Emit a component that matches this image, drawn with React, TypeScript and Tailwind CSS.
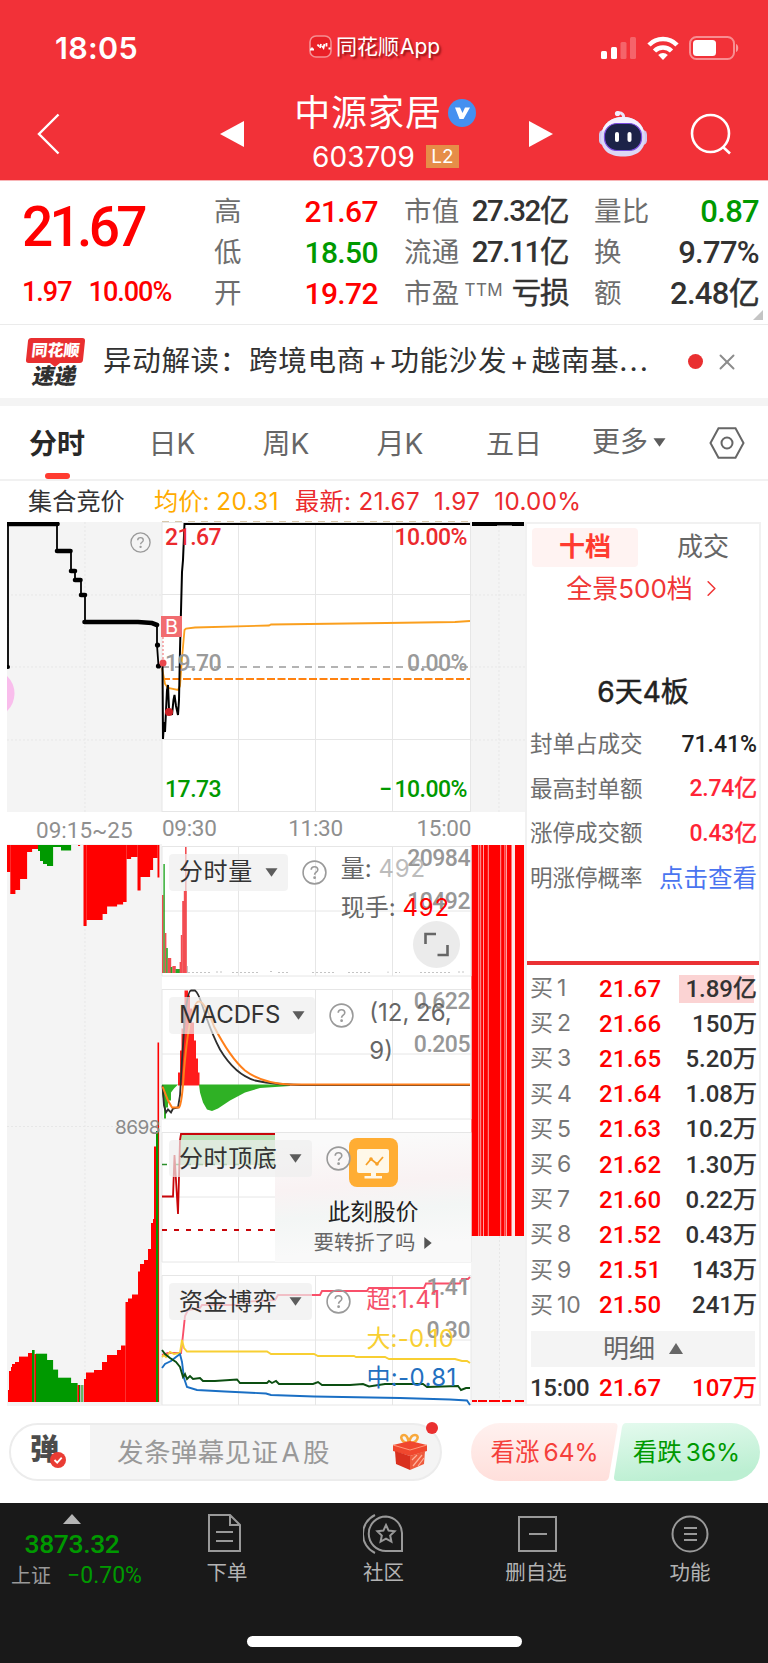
import { ReactNode } from "react"
import { ChevronRight, X } from "lucide-react"

const num = "font-['Roboto','Noto_Sans_CJK_SC',sans-serif] font-medium"

const quotes = [
  [
    { label: '高', value: '21.67', color: 'text-[#ff0000]' },
    { label: '低', value: '18.50', color: 'text-[#009900]' },
    { label: '开', value: '19.72', color: 'text-[#ff0000]' },
  ],
  [
    { label: '市值', value: '27.32亿', color: 'text-[#323232]' },
    { label: '流通', value: '27.11亿', color: 'text-[#323232]' },
    { label: '市盈', sup: 'TTM', value: '亏损', color: 'text-[#323232]' },
  ],
  [
    { label: '量比', value: '0.87', color: 'text-[#009900]' },
    { label: '换', value: '9.77%', color: 'text-[#323232]' },
    { label: '额', value: '2.48亿', color: 'text-[#323232]' },
  ],
]

const quoteCols = [
  'w-[164px] text-[30px] tracking-[-0.600px]',
  'w-[164px] ml-[26px] text-[29.500px] tracking-[-1.400px]',
  'w-[165px] ml-[26px] text-[31px] tracking-[-0.700px]',
]

const bids = [
  ['1', '21.67', '1.89亿'],
  ['2', '21.66', '150万'],
  ['3', '21.65', '5.20万'],
  ['4', '21.64', '1.08万'],
  ['5', '21.63', '10.2万'],
  ['6', '21.62', '1.30万'],
  ['7', '21.60', '0.22万'],
  ['8', '21.52', '0.43万'],
  ['9', '21.51', '143万'],
  ['10', '21.50', '241万'],
]

const limitInfo = [
  { label: '封单占成交', value: '71.41%', style: 'text-[#222222] font-medium' },
  { label: '最高封单额', value: '2.74亿', style: 'text-[#ff2436] font-medium tracking-[-0.200px]' },
  { label: '涨停成交额', value: '0.43亿', style: 'text-[#ff2436] font-medium tracking-[-0.200px]' },
  { label: '明涨停概率', value: '点击查看', style: 'text-[#4a74f0] text-[24.500px] font-normal' },
]

// [x, width, top, color]
const auctionBars: [number, number, number, string][] = [
  [8, 1.5, 1390, 'r'], [9, 2, 1371, 'r'], [11, 1.5, 1367, 'r'], [12, 3, 1364, 'r'], [15, 4, 1362, 'r'], [19, 9, 1356.6, 'r'], [28, 4, 1353, 'r'],
  [32, 2.5, 1350, 'g'], [34.5, 2, 1354, 'r'], [36, 11, 1353.7, 'g'], [47, 6, 1360, 'g'], [53, 5, 1369.6, 'g'],
  [58, 13, 1377.7, 'g'], [71, 6.5, 1383, 'g'], [77.5, 1.5, 1385, 'r'], [79, 1, 1385, 'g'], [80, 1.5, 1385, 'x'], [81.5, 1, 1385, 'g'], [83, 2, 1385, 'x'],
  [84, 2, 1379, 'r'], [86, 8, 1372.5, 'r'], [94, 8, 1370, 'r'], [102, 5, 1362, 'r'], [107, 10, 1355, 'r'], [117, 4, 1350, 'r'],
  [121, 4.5, 1345.5, 'r'], [125.5, 3, 1302, 'r'], [128, 4, 1298.5, 'r'], [132, 6, 1294.5, 'r'], [138, 2, 1271.5, 'r'],
  [140, 4, 1264, 'r'], [144, 4, 1260, 'r'], [148, 3, 1249, 'r'], [151, 2, 1223, 'r'], [153, 1, 1219, 'r'], [154, 2, 1146.5, 'r'],
  [157.5, 1.5, 1042.5, 'r'], [156, 2.2, 1131, 'g'],
]

// [x, width, bottom, color]
const unmatchedBars: [number, number, number, string][] = [
  [7, 3.3, 872, 'r'], [10.3, 5, 894, 'r'], [15, 5, 890, 'r'], [20, 7, 879, 'r'], [27, 5, 852, 'r'], [32, 6, 849, 'r'],
  [38, 2, 851, 'g'], [40, 3, 861, 'g'], [43, 4, 864, 'g'], [47, 6, 866, 'g'], [53, 8, 847, 'g'], [61, 10, 850.5, 'g'], [78, 2, 846, 'r'],
  [83.5, 3, 926, 'r'], [86.5, 16, 920, 'r'], [102, 5, 914, 'r'], [107, 10, 906.5, 'r'], [117, 6, 904.5, 'r'], [121, 5.5, 902, 'r'],
  [126.5, 4.5, 859, 'r'], [131, 6.5, 857, 'r'], [137.5, 3, 890.5, 'r'], [140, 10, 877, 'r'], [150, 3, 870, 'r'], [153, 4.5, 858, 'r'], [157.5, 1.8, 877.5, 'r'],
]

const volumeBars: [number, number, number, string][] = [
  [162, 1.6, 894, 'r'], [163.4, 1.4, 863, 'g'], [164.8, 1.6, 932, 'r'], [166.2, 1.6, 947, 'g'], [167.6, 3.6, 957, 'r'], [170.6, 2, 966, 'g'],
  [172.4, 3.4, 965, 'r'], [175.6, 4.4, 968, 'g'], [179.6, 1.6, 961, 'r'], [180.8, 1.6, 934, 'r'], [182.2, 1.8, 900, 'r'], [183.8, 2.8, 890, 'r'], [185, 1.6, 846, 'r'], [187, 1, 965, 'x'],
]

const barColor: Record<string, string> = { r: '#ff0000', g: '#009900', x: '#bbbbbb' }

// digits stay medium, the chinese unit behind them is a bit lighter
const Value = ({ text }: { text: string }) => {
  const unit = text.replace(/[0-9.%]/g, '')
  return (
    <>{text.replace(unit, '')}{unit && <span className="font-normal [-webkit-text-stroke:0.5px_currentColor]">{unit}</span>}</>
  )
}

const HelpIcon = ({ size = 25 }: { size?: number }) => (
  <svg width={size} height={size} viewBox="0 0 25 25" fill="none" stroke="#9a9a9a" strokeWidth="1.6" className="shrink-0">
    <circle cx="12.5" cy="12.5" r="11.4" />
    <path d="M9.2 9.8c0-1.9 1.4-3.1 3.3-3.1s3.3 1.2 3.3 3c0 2.4-3.2 2.6-3.2 5" />
    <circle cx="12.6" cy="17.7" r="0.6" fill="#9a9a9a" />
  </svg>
)

const Caret = () => (
  <svg width="13" height="9" viewBox="0 0 13 9" fill="#5c5c5c"><path d="M0.500 0.200h12L6.500 8.800z" /></svg>
)

const StatusBar = () => {
  return (
    <div className="flex items-center h-[95px] pl-[55px] pr-[29px] text-white">
      <span className="w-[282px] text-[30.500px] font-semibold tracking-[0.300px]">18:05</span>
      <div className="flex items-center gap-1 text-[21px] [text-shadow:2px_2px_2px_rgba(80,0,0,0.6)]">
        <svg width="23" height="23" viewBox="0 0 23 23" className="ml-[-28px] -mt-[2px]">
          <rect x="1" y="1" width="21" height="21" rx="6" fill="#e92027" stroke="#f58e91" strokeWidth="1.6" />
          <path d="M1 14.500h4M3 12.500v3M8.500 9.500l1.500 2M11 13l1-4M13 11l1.500 2 1-4M17.500 8v3.500M19.500 13.500h2" stroke="white" strokeWidth="1.800" fill="none" />
        </svg>
        <span className="-mt-[2px]">同花顺<span className="ml-[1px]">App</span></span>
      </div>
      <div className="ml-auto flex items-center gap-[10px]">
        <svg width="36" height="24" viewBox="0 0 36 24" fill="white">
          <rect x="0" y="15" width="6" height="8" rx="1.5" />
          <rect x="10" y="11" width="6" height="12" rx="1.5" />
          <rect x="19.500" y="6" width="6" height="17" rx="1.5" opacity="0.25" />
          <rect x="29" y="1" width="6" height="22" rx="1.5" opacity="0.25" />
        </svg>
        <svg width="32" height="24" viewBox="0 0 32 24" fill="none" stroke="white" strokeWidth="4.6">
          <path d="M2 9a19.500 19.500 0 0 1 28 0" />
          <path d="M7.500 15a12 12 0 0 1 17 0" />
          <path d="M16 24l-4.800-5a6.800 6.800 0 0 1 9.600 0z" fill="white" stroke="none" />
        </svg>
        <svg width="50" height="24" viewBox="0 0 50 24">
          <rect x="1" y="1" width="44" height="22" rx="6.500" fill="none" stroke="white" strokeOpacity="0.45" strokeWidth="2" />
          <rect x="4" y="4" width="23" height="16" rx="3.500" fill="white" />
          <path d="M47 8v8c3-1 3-7 0-8z" fill="white" opacity="0.5" />
        </svg>
      </div>
    </div>
  )
}

const Robot = () => (
  <svg width="50" height="48" viewBox="0 0 50 48" className="-ml-px">
    <path d="M25 10c2-5-1-8-6-7" fill="none" stroke="#e8e4fa" strokeWidth="3" />
    <circle cx="19.500" cy="3.500" r="2.600" fill="#f3efff" />
    <rect x="1" y="20" width="9" height="15" rx="4.500" fill="#cfc9ee" />
    <rect x="40" y="20" width="9" height="15" rx="4.500" fill="#cfc9ee" />
    <path d="M25 7C12 7 3 15 3 28c0 13 9 18.500 22 18.500S47 41 47 28C47 15 38 7 25 7z" fill="#dcd8f6" />
    <path d="M25 7C14 7 6 13 4 22c10-8 32-8 42 0C44 13 36 7 25 7z" fill="#f4f2ff" />
    <rect x="6.500" y="13.500" width="37" height="27" rx="12.500" fill="#1c2348" stroke="#7b4be0" strokeWidth="1.2" />
    <rect x="17" y="22" width="4" height="10" rx="2" fill="white" />
    <rect x="29.500" y="22" width="4" height="10" rx="2" fill="white" />
  </svg>
)

const TitleBar = () => {
  return (
    <div className="flex items-center h-[77px] text-white pl-[37px] pr-9">
      <svg width="23" height="42" viewBox="0 0 23 42" fill="none" stroke="white" strokeWidth="2.400"><path d="M21.500 1.500L2 21l19.500 19.500" /></svg>
      <svg width="24" height="26" viewBox="0 0 24 26" fill="white" className="ml-[160px]"><path d="M24 0v26L0 13z" /></svg>
      <div className="w-[285px] flex flex-col items-center mt-[2px]">
        <div className="flex items-center gap-[6px] h-[44px] pr-[3px]">
          <span className="text-[36px] leading-[44px] tracking-[0.900px]">中源家居</span>
          <svg width="28" height="28" viewBox="0 0 28 28">
            <circle cx="14" cy="14" r="14" fill="#4590f0" />
            <path d="M7 8.500h5l2.500 5.500 2.500-5.500h5L15.500 20h-4z" fill="white" />
          </svg>
        </div>
        <div className="flex items-center h-[44px] pr-[2px]">
          <span className="text-[28px] leading-[44px]">603709</span>
          <span className="ml-[11px] w-[33px] h-[23px] bg-[#e68d48] text-[19px] leading-[23px] text-center">L2</span>
        </div>
      </div>
      <svg width="24" height="26" viewBox="0 0 24 26" fill="white"><path d="M0 0v26l24-13z" /></svg>
      <div className="ml-auto flex items-center gap-[42px]">
        <Robot />
        <svg width="42" height="42" viewBox="0 0 42 42" fill="none" stroke="white" strokeWidth="2.600">
          <circle cx="20.500" cy="20.500" r="18.500" />
          <path d="M33 34l7 6.500" />
        </svg>
      </div>
    </div>
  )
}

const Quote = () => {
  return (
    <section className="relative flex h-[145px] border-b border-[#ebebeb] border-t border-t-[#f8b5b7] pr-[9px]">
      <div className={`w-[214px] pl-[22px] text-[#ff0000] ${num}`}>
        <p className="mt-[13px] text-[55px] leading-[66px] tracking-[-3.700px]">21.67</p>
        <p className="mt-[13px] text-[27px] leading-[38px] tracking-[-1px] flex gap-[17px]"><span>1.97</span><span>10.00%</span></p>
      </div>
      {quotes.map((col, i) => (
        <div className={`${quoteCols[i]} pt-[10px]`} key={i}>
          {col.map((item: any) => (
            <div className="flex items-center justify-between h-[41px]" key={item.label}>
              <span className="flex text-[27.500px] leading-none tracking-[0.300px] text-[#6e6e6e] whitespace-nowrap">{item.label}
                {item.sup && <sup className="text-[17px] leading-none ml-[5px] mt-[2px] top-0">{item.sup}</sup>}
              </span>
              <span className={`${num} ${item.color} leading-none whitespace-nowrap`}><Value text={item.value} /></span>
            </div>
          ))}
        </div>
      ))}
      <svg width="10" height="10" className="absolute right-[5px] bottom-[4px]" viewBox="0 0 10 10" fill="#c4c4c4"><path d="M10 0v10H0z" /></svg>
    </section>
  )
}

const News = () => {
  return (
    <section className="flex items-center h-[81px] border-b-8 border-[#f4f4f4]">
      <div className="ml-[25px] w-[60px] flex flex-col items-center">
        <div className="w-[57px] h-[25px] bg-[#e92f30] rounded-[3px] -skew-x-6 text-white text-[16px] leading-[25px] font-black text-center">同花顺</div>
        <svg width="10" height="4" viewBox="0 0 10 4" fill="#e92f30"><path d="M0 0h10L5 4z" /></svg>
        <div className="-skew-x-12 text-[#303030] text-[22px] leading-[18px] font-black">速递</div>
      </div>
      <p className="ml-[18px] w-[560px] text-[28.500px] leading-none tracking-[0.700px] text-[#323232] whitespace-nowrap">
        异动解读：跨境电商<span className="mx-[2.500px]">+</span>功能沙发<span className="mx-[2.500px]">+</span>越南基<span className="tracking-[2px]">...</span>
      </p>
      <span className="ml-[25px] size-[15px] rounded-full bg-[#e92f30]" />
      <X size={26} color="#8c8c8c" strokeWidth={1.800} className="ml-[11px]" />
    </section>
  )
}

const Tabs = () => {
  return (
    <nav className="flex h-[75px] border-b-2 border-[#f1f1f1] text-[28px] text-[#666666] leading-[77px] text-center">
      <div className="relative w-[114px] font-bold text-[#282828]">分时
        <span className="absolute left-[45px] bottom-0 w-[25px] h-[6px] rounded-[3px] bg-[#ff3b30]" />
      </div>
      {['日K', '周K', '月K', '五日'].map((tab) => (
        <div className="w-[114px] pl-[2px]" key={tab}>{tab}</div>
      ))}
      <div className="w-[118px] flex items-center justify-center gap-[5px]">更多<Caret /></div>
      <div className="w-[77px] flex items-center justify-center">
        <svg width="36" height="32" viewBox="0 0 36 32" fill="none" stroke="#666666" strokeWidth="2">
          <path d="M9.500 1.200h17L34.500 16l-8 14.800h-17L1.500 16z" />
          <circle cx="18" cy="16" r="5.500" />
        </svg>
      </div>
    </nav>
  )
}

const AuctionColumn = () => {
  return (
    <div className="w-[155px]">
      <svg width="155" height="290" viewBox="7 522 155 290" className="block bg-[#f4f4f4]">
        <path d="M7 595H162M7 667H162M7 740H162M85 522V812" stroke="#e7e7e7" strokeDasharray="2 2" />
        <circle cx="-10" cy="693.500" r="24.500" fill="#f9bdec" />
        <path d="M8 667V524H57V551H71V571H75V580H81V595H85V622L152 623L157 626V645L158.500 666" fill="none" stroke="black" strokeWidth="1.800" />
        <path d="M8 524H57.500M57 551H70.500M71 571H75M75 580H80.500M81 595H85M84.500 622H138L152 623L157 625" fill="none" stroke="black" strokeWidth="4.600" strokeLinecap="round" />
        <circle cx="157.500" cy="645" r="2.600" />
        <circle cx="158.500" cy="666" r="2.600" />
        <circle cx="8" cy="667" r="2" />
        <svg x="130" y="532"><HelpIcon size={21} /></svg>
      </svg>
      <div className="h-[32px] pl-[29px] text-[#8f8f8f] font-['Roboto'] text-[22.500px] leading-[37px]">09:15~25</div>
      <svg width="155" height="562" viewBox="7 844 155 562" className="block bg-[#f4f4f4]">
        <path d="M7 1126.500H162M85 845V1400" stroke="#e7e7e7" strokeDasharray="2 2" />
        {unmatchedBars.map(([x, w, y, c], i) => <rect key={i} x={x} y="845" width={w + 0.1} height={y - 845} fill={barColor[c]} />)}
        {auctionBars.map(([x, w, y, c], i) => <rect key={i} x={x} y={y} width={w + 0.1} height={1402 - y} fill={barColor[c]} />)}
        <text x="160" y="1133.500" textAnchor="end" fill="#8a8a8a" className="font-['Inter'] text-[19px] tracking-[-0.500px]">8698</text>
      </svg>
    </div>
  )
}

const axis = "font-['Roboto'] font-medium text-[23px] tracking-[-0.500px]"

const PriceChart = () => {
  return (
    <svg width="309" height="290" viewBox="162 522 309 290" className="block overflow-visible">
      <path d="M162 522.500H471M162 594.500H471M162 739.500H471M162 811.500H471M162 522V812M238.500 522V812M315.500 522V812M392.500 522V812M470.500 522V812" stroke="#e6e6e6" />
      <path d="M162 521.500H471" stroke="#d9c9ac" strokeDasharray="7 6" />
      <path d="M162 667H471" stroke="#9a9a9a" strokeWidth="1.500" strokeDasharray="7 6" />
      <path d="M162 679H470" stroke="#ff8210" strokeWidth="2" strokeDasharray="8 2.500" />
      <path d="M162 668L165 684L168 688L178 690L180 686L182 658L184.500 630L186 628.500L195 627.500L269 625.500L271 624.500L386 623L455 622L470 621" fill="none" stroke="#fa9f1e" strokeWidth="1.800" />
      <path d="M162.500 664L163 739L164 722L165 732L167 690L168 685L169 709L171 712L172 715L173.500 700L174.500 695L176 706L178 715L179 700L180 650L182 572L183 560L184.500 524H470" fill="none" stroke="black" strokeWidth="2" />
      <path d="M163 637V660" stroke="#f2686c" strokeDasharray="2 2" />
      <circle cx="163" cy="663" r="3.500" fill="#e9474c" />
      <circle cx="169" cy="712" r="4" fill="#cc2227" />
      <rect x="161" y="616" width="21" height="21" fill="#f16c70" />
      <text x="171.500" y="634" textAnchor="middle" fill="white" className="font-['Inter'] text-[20px]">B</text>
      <g className={axis}>
        <text x="165" y="545" fill="#eb2a2e">21.67</text>
        <text x="467" y="545" textAnchor="end" fill="#eb2a2e">10.00%</text>
        <text x="165" y="671" fill="#9a9a9a">19.70</text>
        <text x="467" y="671" textAnchor="end" fill="#9a9a9a">0.00%</text>
        <text x="165" y="797" fill="#009900">17.73</text>
        <text x="467" y="797" textAnchor="end" fill="#009900"><tspan>−</tspan><tspan dx="3">10.00%</tspan></text>
      </g>
    </svg>
  )
}

type PanelProps = { top: number, title: string, info?: ReactNode, labels?: string[], popup?: ReactNode, children: ReactNode }

const Panel = ({ top, title, info, labels = [], popup, children }: PanelProps) => {
  return (
    <div className="relative h-[130.500px] mb-[12.800px]">
      <svg width="309" height="131" viewBox={`162 ${top} 309 131`} className="absolute inset-0 overflow-visible">
        <path d={`M162 ${top + 0.5}h309v129.500h-309zM162 ${top + 65}h309M238.500 ${top}v130M315.500 ${top}v130M392.500 ${top}v130`} fill="none" stroke="#e6e6e6" />
        {children}
        <g fill="#979797" className={axis}>
          {labels.map((label, i) => <text key={label} x="470" y={top + 19.5 + i * 43} textAnchor="end">{label}</text>)}
        </g>
      </svg>
      {popup}
      <div className="relative flex items-start pt-2 pl-[7px] text-[24px] text-[#333333]">
        <div className="flex items-center gap-[12px] h-[37px] pl-[10px] pr-[10px] rounded bg-[#eeeeee]/70 whitespace-nowrap leading-none">
          <span className={title == 'MACDFS' ? 'tracking-[-0.100px]' : 'tracking-[0.600px]'}>{title}</span><Caret />
        </div>
        <div className="flex items-center h-[37px] ml-[14px]"><HelpIcon /></div>
        {info}
      </div>
    </div>
  )
}

const ChartColumn = () => {
  return (
    <div className="w-[309px]">
      <PriceChart />
      <div className="flex justify-between h-[33.600px] text-[#8f8f8f] font-['Roboto'] text-[22.500px] leading-[32px] tracking-[-0.300px]">
        <span>09:30</span><span className="-ml-[2px]">11:30</span><span>15:00</span>
      </div>
      <Panel top={845} title="分时量" labels={['20984', '10492']}
        info={
          <div className="ml-[14px] text-[#666666] leading-[38.500px] -mt-[3.500px] whitespace-nowrap">
            <p>量: <span className="text-[#bcbcbc] tracking-[0.800px]">492</span></p>
            <p>现手: <span className="text-[#ff0000] tracking-[0.800px]">492</span></p>
          </div>
        }
        popup={
          <div className="absolute left-[251px] top-[75px] size-[47px] rounded-full bg-[#ebebeb] flex items-center justify-center">
            <svg width="25" height="25" viewBox="0 0 25 25" fill="none" stroke="#666666" strokeWidth="2.600"><path d="M1.500 12V2H12M23.500 13V23H13.500" /></svg>
          </div>
        }
      >
        <g opacity="0.85">
          {volumeBars.map(([x, w, y, c], i) => <rect key={i} x={x} y={y} width={w} height={972 - y} fill={c == 'r' ? '#f02f35' : barColor[c]} />)}
        </g>
        <path d="M188 971.500H210M216 971H224M232 971.500H258M270 970.500H274M278 971.500H290M312 971.500H335M348 971.500H370M388 970.500V972M395 971.500H400M420 971.500H450M458 971H465" stroke="#c4c4c4" strokeDasharray="2 2" />
      </Panel>
      <Panel top={988.5} title="MACDFS" labels={['0.622', '0.205']}
        info={<p className="ml-[15px] w-[95px] pr-2 text-[#666666] leading-[38px] -mt-[3px]">(12, 26, 9)</p>}
      >
        <path d="M178 1085V1072H180V1050H181.500V1028H183V1008H184.500V990H188V995H190V1008H192V1022H194V1040H196V1058H198V1072H199.500V1085z" fill="#ff1c1c" />
        <path d="M162 1084H178L174 1088L171 1092V1100H168V1107H166V1118H164V1104L162 1092z" fill="#2fb125" />
        <path d="M199 1084L200 1092L203 1102L207 1109L212 1110.500L218 1108L230 1100L245 1092L260 1087.500L290 1085.500V1084z" fill="#2fb125" />
        <path d="M162.500 1085L164 1105L166 1112L168 1109L171 1112L173 1108L178 1107L180 1095L182 1060L185 1015Q188 990 191 990H195Q198 992 202 1004Q211 1032 220 1049Q235 1074 255 1080Q275 1084.500 310 1084.500H470" fill="none" stroke="#2e2e2e" strokeWidth="1.800" />
        <path d="M162.500 1086L168 1100L172 1107H179Q182 1104 184 1070Q190 1001 199 1001Q205 1001 214 1026Q230 1057 245 1070Q262 1083 290 1084H470" fill="none" stroke="#ff7f1a" strokeWidth="2" />
      </Panel>
      <Panel top={1132} title="分时顶底"
        popup={
          <div className="absolute right-0 top-px w-[196px] h-[129px] flex flex-col items-center bg-[linear-gradient(175deg,#fafafa_10%,#f9f2f3_40%,#f3f6f5_60%,#f9f9f9_85%)]">
            <svg width="49" height="49" viewBox="0 0 49 49" className="mt-[5px] shrink-0">
              <rect width="49" height="49" rx="8" fill="#ffad33" />
              <rect x="8" y="11" width="32" height="24" rx="2" fill="#fff8e8" />
              <path d="M22 35h5v3h6v2.500H15.500V38H22z" fill="#fff8e8" />
              <path d="M17 27l5-6 6 5 6-7" fill="none" stroke="#f7a128" strokeWidth="1.800" />
              <circle cx="22" cy="21" r="1.800" fill="#f7a128" /><circle cx="28" cy="26" r="1.800" fill="#f7a128" />
            </svg>
            <p className="mt-[8px] text-[22.700px] leading-[34px] text-[#222222]">此刻股价</p>
            <p className="flex items-center gap-[9px] text-[20.400px] leading-[28px] text-[#666666]">要转折了吗
              <svg width="8" height="12" viewBox="0 0 8 13" fill="#555555"><path d="M0 0l8 6.500L0 13z" /></svg>
            </p>
          </div>
        }
      >
        <rect x="180" y="1134" width="95" height="31" fill="#b7e1b5" />
        <path d="M162 1164.500H275" stroke="#2c8f2c" strokeWidth="1.600" strokeDasharray="5 7" />
        <path d="M162 1230H275" stroke="#c8060a" strokeWidth="2" strokeDasharray="5 7" />
        <path d="M162 1196.500H173L174.500 1155L178 1214L180 1140L181 1134H275" fill="none" stroke="#c8060a" strokeWidth="1.800" />
      </Panel>
      <div className="-mb-[13px]">
        <Panel top={1275} title="资金博弈" labels={['1.41', '0.30']}
          info={
            <div className="ml-[15px] leading-[38.800px] whitespace-nowrap -mt-[2px]">
              <p className="text-[#f5506a] tracking-[0.300px]">超:1.41</p>
              <p className="text-[#f8cf33] tracking-[0.200px]">大:-0.10</p>
              <p className="text-[#2370c0] tracking-[0.400px]">中:-0.81</p>
            </div>
          }
        >
          <g fill="none" strokeWidth="1.900">
            <path d="M162 1355L168 1353H181L183 1335L185 1316L188 1310L200 1308L202 1305H238L240 1302L275 1300L278 1295H320L322 1291H367L369 1288H424L426 1283.500H460L462 1279H468L470 1277" stroke="#f9506a" />
            <path d="M162 1357L164 1355L166 1357L170 1352L174 1354L180 1353L182 1340L184 1348L187 1351.500H267L271 1354H314L318 1356H354L356 1357H385L389 1359H455L462 1361L467 1361L470 1363" stroke="#f8cf33" />
            <path d="M162 1368L165 1364L171 1361L176 1357L180 1354L182 1362L184 1378L187 1387L197 1390L225 1391.500L266 1393.500L271 1395L314 1396.500L400 1398L450 1399.500L467 1400.500L470 1405" stroke="#1a6fc4" />
            <path d="M162 1350L165 1354L170 1358L176 1362L180 1367L183 1377L185 1374L187 1379L190 1376L193 1379L200 1378L203 1381L215 1381L237 1379.500L240 1383H267L269 1381L272 1383L276 1381L279 1384H313L318 1382L322 1385L350 1385L363 1384L369 1386.500L385 1384H423L427 1387L458 1386L461 1390L466 1388L470 1388" stroke="#0c4f12" />
          </g>
        </Panel>
      </div>
    </div>
  )
}

const AfterHours = () => {
  return (
    <div className="w-[54px]">
      <svg width="54" height="290" viewBox="471 522 54 290" className="block bg-[#f4f4f4]">
        <path d="M471 595H525M471 667H525M471 740H525M499 522V812" stroke="#e7e7e7" strokeDasharray="2 2" />
        <path d="M472 524H497M497 523.500H512M512 524H524" stroke="black" strokeWidth="4" />
      </svg>
      <div className="h-[33px]" />
      <svg width="54" height="561" viewBox="471 845 54 561" className="block bg-[#f4f4f4]">
        <path d="M499.500 1236V1400" stroke="#e7e7e7" strokeDasharray="2 2" />
        <rect x="471.500" y="845" width="52.500" height="391" fill="#ff0000" />
        <path d="M478.700 845V1236M480.700 845V1236M483.500 845V1236M488.300 845V1236M500.700 845V1236M504.900 845V1236M506.500 845V1236" stroke="#ffc9c9" strokeWidth="0.800" />
        <rect x="511.500" y="845" width="3.500" height="391" fill="#fde8e8" />
        <path d="M472 1401H477M478 1401H487M489 1401H500M502 1401H511M515 1401H524" stroke="#ff0000" strokeWidth="2" />
      </svg>
    </div>
  )
}

const OrderBook = () => {
  return (
    <aside className="w-[236px] h-[884px] border-2 border-[#f1f1f1]">
      <div className="flex pt-[4px] pl-[5px] text-[26px] leading-[38px] text-center">
        <span className="w-[106px] h-[39px] rounded bg-[#fff3f2] text-[#ff3b30] font-bold shrink-0">十档</span>
        <span className="w-[121px] pl-[9px] text-[#666666] shrink-0">成交</span>
      </div>
      <div className="flex items-center justify-center gap-[5px] h-[43px] text-[26px] text-[#f03636]">全景500档
        <ChevronRight size={27} strokeWidth={1.400} className="-mr-[5px]" />
      </div>
      <p className="mt-[60px] h-[44px] text-center text-[28px] leading-[44px] text-[#222222] [-webkit-text-stroke:0.5px_currentColor]">6天4板</p>
      <div className="mt-[8px] pl-[3px] pr-[2px]">
        {limitInfo.map((item) => (
          <div className="flex items-center justify-between h-[44.500px] leading-none text-[22.500px] whitespace-nowrap" key={item.label}>
            <span className="text-[#6e6e6e]">{item.label}</span>
            {item.value == '点击查看'
              ? <span className={item.style}>{item.value}</span>
              : <span className={`text-[23px] font-['Roboto','Noto_Sans_CJK_SC'] ${item.style}`}><Value text={item.value} /></span>}
          </div>
        ))}
      </div>
      <hr className="border-t-4 border-[#ea3134] mt-[61px] mb-[6px]" />
      <div className="pl-[3px] pr-[2px]">
        {bids.map(([level, price, amount], i) => (
          <div className={`flex items-center h-[35.200px] leading-none text-[24px] text-[#323232] ${num}`} key={level}>
            <span className="w-[69px] text-[#777777] text-[23px] font-normal font-['Inter','Noto_Sans_CJK_SC']">买<span className="ml-1">{level}</span></span>
            <span className="text-[#ff0000] tracking-[0.200px]">{price}</span>
            <span className={i == 0 ? "ml-auto pl-[6px] py-[2px] bg-[linear-gradient(to_right,#fbd3d3_75px,transparent_75px)]" : "ml-auto"}><Value text={amount} /></span>
          </div>
        ))}
      </div>
      <div className="ml-[4px] mr-[4px] mt-[8px] h-[36px] bg-[#f4f4f4] flex items-center justify-center gap-[14px] text-[26px] leading-none text-[#666666]">明细
        <svg width="14" height="11" viewBox="0 0 14 11" fill="#666666"><path d="M7 0l7 11H0z" /></svg>
      </div>
      <div className={`flex items-center h-[43px] pl-[3px] pr-[2px] text-[24px] leading-none text-[#ff0000] ${num}`}>
        <span className="w-[69px] text-[#323232] tracking-[-0.300px]">15:00</span>
        <span className="tracking-[0.200px]">21.67</span>
        <span className="ml-auto"><Value text="107万" /></span>
      </div>
    </aside>
  )
}

const Danmu = () => {
  return (
    <div className="flex items-center h-[97px] pl-[9px] pr-2 pb-[6px]">
      <div className="relative flex items-center w-[433px] h-[58px] rounded-full border-2 border-[#ececec] bg-[#f4f4f4]">
        <div className="relative w-[79px] h-full rounded-l-full bg-white pl-[19px] text-[29px] leading-[50px] font-black text-[#4c4c4c]">弹
          <svg width="16" height="16" viewBox="0 0 16 16" className="absolute left-[39px] top-[27px]">
            <circle cx="8" cy="8" r="8" fill="#ea3c34" /><path d="M4.500 8l2.700 2.700 4.500-5" fill="none" stroke="white" strokeWidth="1.800" />
          </svg>
        </div>
        <span className="ml-[27px] mt-[2px] text-[26.500px] leading-none text-[#999999] whitespace-nowrap tracking-[0.400px]">发条弹幕见证<span className="mx-[3px]">A</span>股</span>
        <svg width="36" height="37" viewBox="0 0 36 37" className="ml-auto mr-[12px]">
          <path d="M17 10C9 10 7 2 12 2c4 0 4 5 5 8 1-3 1-8 6-8s3 8-6 8z" fill="none" stroke="#f8a83b" strokeWidth="2.600" />
          <path d="M1 12l17-4 17 4v6l-17 5L1 18z" fill="#f0472e" />
          <path d="M3 18l15 5v14L4 31z" fill="#d9301f" />
          <path d="M33 18l-15 5v14l14-6z" fill="#ee5a3c" />
          <path d="M21 33l9-11M20 27l5-5M26 33l6-8" stroke="#ffb09a" strokeWidth="1.200" />
          <path d="M1 12l17 5 17-5" fill="none" stroke="#ff9a7c" />
        </svg>
        <span className="absolute right-[2px] -top-[3px] size-[12px] rounded-full bg-[#ea3030]" />
      </div>
      <div className="relative ml-auto flex w-[289px] h-[58px] text-[24px] leading-[58px] text-center">
        <svg width="289" height="58" viewBox="0 0 289 58" className="absolute inset-0">
          <defs>
            <linearGradient id="up" x2="0" y2="1"><stop stopColor="#fff1ef" /><stop offset="1" stopColor="#ffdfdb" /></linearGradient>
            <linearGradient id="down" x2="0.3" y2="1"><stop stopColor="#e4faee" /><stop offset="1" stopColor="#bcefd2" /></linearGradient>
          </defs>
          <path d="M29 0H143q4 0 3.500 4L138 54q-1 4-5 4H29a29 29 0 0 1 0-58z" fill="url(#up)" />
          <path d="M155 0H260a29 29 0 0 1 0 58H147q-4.500 0-4-4L151 4q1-4 4-4z" fill="url(#down)" />
        </svg>
        <span className="relative w-[147px] text-[24.500px] text-[#f5403b]">看涨<span className="ml-1">64%</span></span>
        <span className="relative w-[137px] text-[24.500px] text-[#009900]">看跌<span className="ml-1">36%</span></span>
      </div>
    </div>
  )
}

const navItems = [
  { label: '下单', width: 'w-[156px]', icon: <path d="M2 1h21l10 10v26H2V3zM23 1v10h10M9 18h17M9 27h17" /> },
  { label: '社区', width: 'w-[157px]', icon: <g><path d="M22 2.500A17 17 0 1 0 22 37H38V19A17 17 0 0 0 22 2.500zM11 1A21 21 0 0 0 11 39" /><path d="M22 11l2.600 5.600 6 .7-4.400 4.200 1.200 6.200-5.400-3-5.400 3 1.200-6.200-4.400-4.200 6-.7z" /></g> },
  { label: '删自选', width: 'w-[148px]', icon: <path d="M3 3H40V37H3zM13 20H31" /> },
  { label: '功能', width: 'w-[160px]', icon: <g><circle cx="20" cy="20" r="17.500" /><path d="M14 14H27M14 20H27M14 26H27" /></g> },
]

const BottomNav = () => {
  return (
    <footer className="h-[160px] bg-[#191919]">
      <div className="flex h-[133px]">
        <div className={`w-[144px] shrink-0 flex flex-col items-center text-[#009900] ${num}`}>
          <svg width="18" height="10" viewBox="0 0 18 10" fill="#b5b5b5" className="mt-[11px]"><path d="M9 0l9 10H0z" /></svg>
          <span className="mt-[5px] text-[26.500px] leading-[30px] tracking-[-0.400px]">3873.32</span>
          <div className="mt-[2px] flex items-center gap-[16px] text-[23px] leading-[30px] pl-[9px] font-normal whitespace-nowrap">
            <span className="text-[#999999] text-[20px]">上证</span>−0.70%
          </div>
        </div>
        <div className="flex shrink-0 pl-[5px]">
          {navItems.map((item) => (
            <div className={`${item.width} shrink-0 flex flex-col items-center pt-[11px]`} key={item.label}>
              <svg width="42" height="40" viewBox="-1 0 42 40" fill="none" stroke="#999999" strokeWidth="2">{item.icon}</svg>
              <span className="mt-[3px] text-[20.500px] leading-[31px] text-[#b3b3b3]">{item.label}</span>
            </div>
          ))}
        </div>
      </div>
      <div className="mx-auto w-[275px] h-[11px] rounded-full bg-white" />
    </footer>
  )
}

export default function App() {
  return (
    <main className="w-[768px] h-[1663px] overflow-hidden bg-white font-['Inter','Noto_Sans_CJK_SC',sans-serif]">
      <header className="h-[180px] bg-[#f23138]">
        <StatusBar />
        <TitleBar />
      </header>
      <Quote />
      <News />
      <Tabs />
      <div className="flex h-[41px] items-center pl-[28px] pt-[2px] text-[24.200px] leading-none whitespace-nowrap">
        <span className="w-[126px] text-[#323232]">集合竞价</span>
        <span className="w-[141px] text-[#ffab00]">均价: <span className="tracking-[0.500px]">20.31</span></span>
        <span className="flex gap-[14px] text-[#eb2a2e] tracking-[0.350px]"><span>最新: 21.67</span><span>1.97</span><span>10.00%</span></span>
      </div>
      <div className="flex h-[884px] pl-[7px]">
        <AuctionColumn />
        <ChartColumn />
        <AfterHours />
        <OrderBook />
      </div>
      <Danmu />
      <BottomNav />
    </main>
  )
}
